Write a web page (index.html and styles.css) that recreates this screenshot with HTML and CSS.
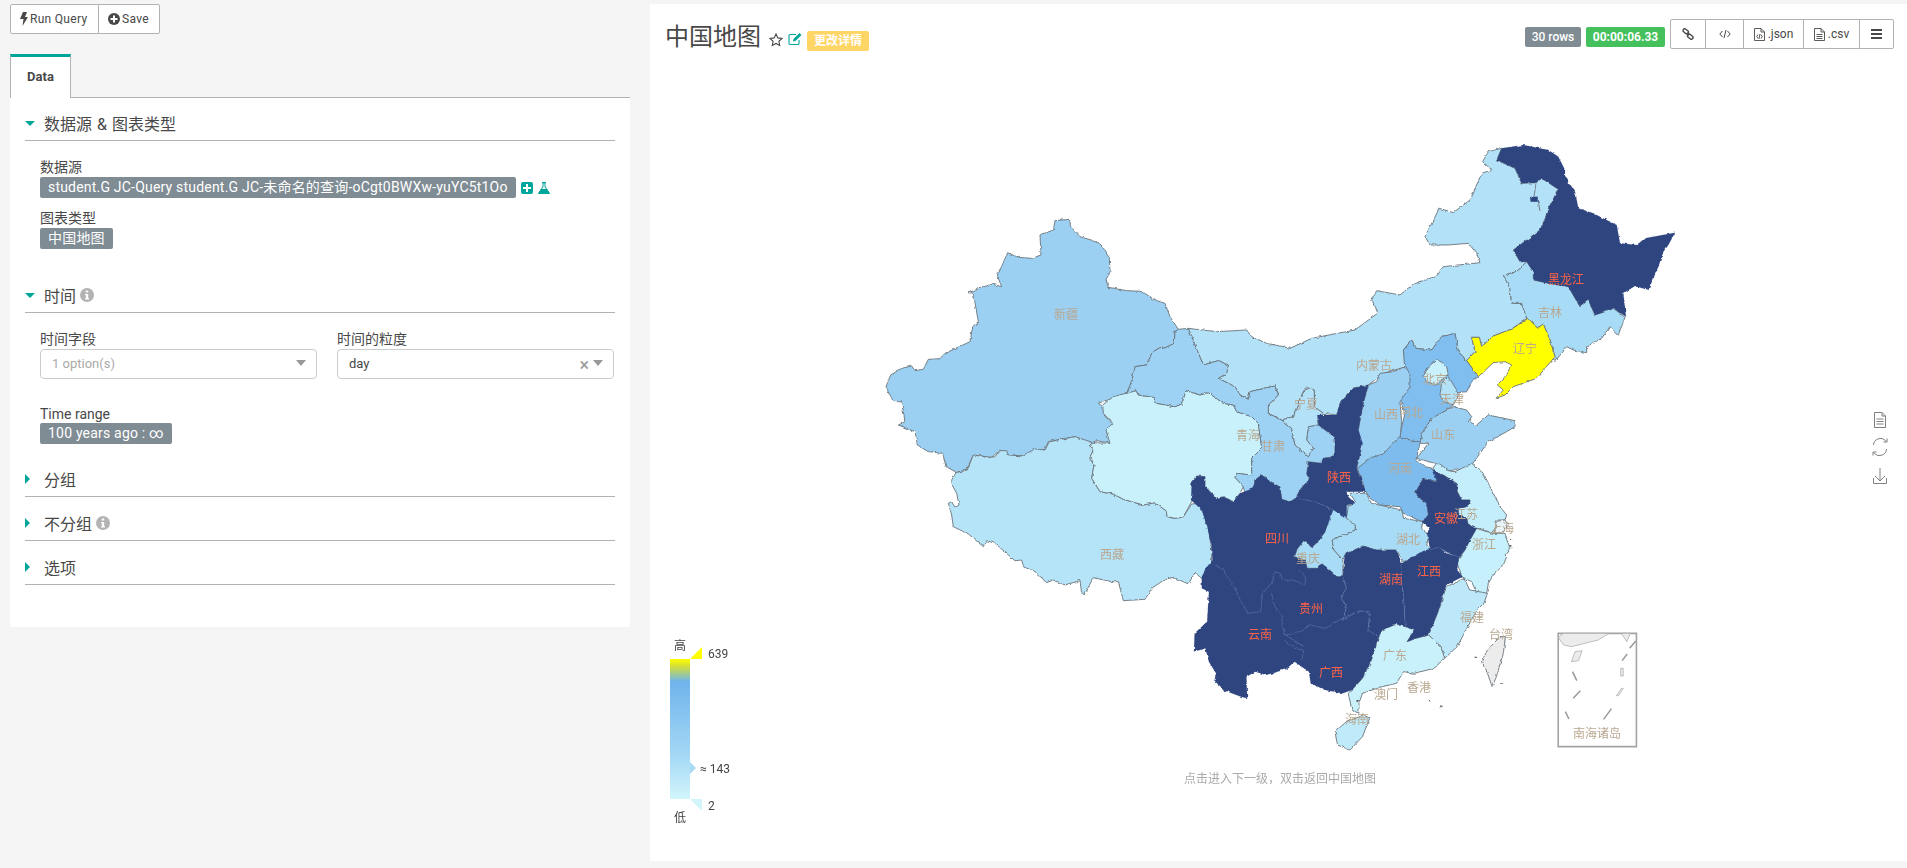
FILE: index.html
```html
<!DOCTYPE html>
<html lang="zh">
<head>
<meta charset="utf-8">
<title>中国地图</title>
<link rel="stylesheet" href="styles.css">
</head>
<body>
<div class="page">
  <aside class="side">
    <div class="btn-group">
      <button class="btn"><svg class="ico-bolt" viewBox="0 0 8 14"><path d="M3 0h4L5 5h3L2.500 14 3.500 7H0z"/></svg>Run Query</button>
      <button class="btn"><svg class="ico-plus" viewBox="0 0 12 12"><circle cx="6" cy="6" r="6"/><path class="white" d="M5 2.500h2V5h2.500v2H7v2.500H5V7H2.500V5H5z"/></svg>Save</button>
    </div>
    <div class="tabs"><div class="tab">Data</div></div>
    <div class="panel">
      <section class="section s-source">
        <div class="head"><span class="tri-down"></span>数据源 &amp; 图表类型</div>
        <div class="body">
          <div class="label">数据源</div>
          <div class="badge-row">
            <span class="badge">student.G JC-Query student.G JC-未命名的查询-oCgt0BWXw-yuYC5t1Oo</span>
            <svg class="ico-add" viewBox="0 0 12 12"><rect width="12" height="12" rx="2"/><path class="white" d="M5 2h2v3h3v2H7v3H5V7H2V5h3z"/></svg>
            <svg class="ico-flask" viewBox="0 0 12 12"><path d="M4 0h4v1H7.500v3.500L11.800 11a.7.7 0 0 1-.6 1H.8a.7.7 0 0 1-.6-1L4.500 4.500V1H4z"/><path class="white" d="M5.500 1.500h1v3.300L8 7H4l1.500-2.200z"/></svg>
          </div>
          <div class="label label-next">图表类型</div>
          <div class="badge-row"><span class="badge">中国地图</span></div>
        </div>
      </section>
      <section class="section s-time">
        <div class="head"><span class="tri-down"></span>时间<svg class="ico-info" viewBox="0 0 14 14"><circle cx="7" cy="7" r="7"/><path class="white" d="M5.800 2.500h2.400v2H5.800zM5 6h3.200v4.200H9v1.300H5v-1.300h.9V7.300H5z"/></svg></div>
        <div class="body">
          <div class="select-grid">
            <div>
              <div class="label">时间字段</div>
              <div class="select"><span class="placeholder">1 option(s)</span><span class="caret"></span></div>
            </div>
            <div>
              <div class="label">时间的粒度</div>
              <div class="select"><span class="value">day</span><span class="clear">×</span><span class="caret"></span></div>
            </div>
          </div>
          <div class="label label-range">Time range</div>
          <div class="badge-row"><span class="badge">100 years ago : ∞</span></div>
        </div>
      </section>
      <section class="section s-closed"><div class="head"><span class="tri-right"></span>分组</div></section>
      <section class="section s-closed"><div class="head"><span class="tri-right"></span>不分组<svg class="ico-info" viewBox="0 0 14 14"><circle cx="7" cy="7" r="7"/><path class="white" d="M5.800 2.500h2.400v2H5.800zM5 6h3.200v4.200H9v1.300H5v-1.300h.9V7.300H5z"/></svg></div></section>
      <section class="section s-closed"><div class="head"><span class="tri-right"></span>选项</div></section>
    </div>
  </aside>

  <main class="chart">
    <header class="chart-head">
      <div class="title-wrap">
        <h1 class="title">中国地图</h1>
        <svg class="ico-star" viewBox="0 0 14 14"><path d="M7 1l1.800 3.900 4.200.5-3.100 2.900.8 4.200L7 10.400l-3.700 2.100.8-4.200L1 5.400l4.200-.5z"/></svg>
        <svg class="ico-edit" viewBox="0 0 14 14"><path class="e1" d="M11 8v3.500a1 1 0 0 1-1 1H2a1 1 0 0 1-1-1v-8a1 1 0 0 1 1-1h6"/><path class="e2" d="M5 9.500l.5-2.500L11.500 1 13.500 3 7.500 9z"/></svg>
        <span class="tag-warn">更改详情</span>
      </div>
      <div class="tools">
        <span class="tag tag-rows">30 rows</span>
        <span class="tag tag-time">00:00:06.33</span>
        <div class="tool-group">
          <button class="tool t-link"><svg class="ico-link" viewBox="0 0 12 12"><rect x="0.700" y="1.600" width="6" height="3.400" rx="1.700" transform="rotate(40 3.700 3.300)"/><rect x="5.300" y="7" width="6" height="3.400" rx="1.700" transform="rotate(40 8.300 8.700)"/><path d="M4.800 4.700l2.400 2.600"/></svg></button>
          <button class="tool t-code"><svg class="ico-tool" viewBox="0 0 12 12"><path d="M3.500 3L.8 6l2.700 3M8.500 3l2.700 3-2.700 3M7 2L5 10"/></svg></button>
          <button class="tool t-json"><svg class="ico-file" viewBox="0 0 11 13"><path d="M.5.500h6.500L10.500 4v8.500H.5zM7 .5V4h3.500M4 6.500L2.800 8.500 4 10.500M7 6.500l1.200 2L7 10.500M6 6l-1 5"/></svg>.json</button>
          <button class="tool t-csv"><svg class="ico-file" viewBox="0 0 11 13"><path d="M.5.500h6.500L10.500 4v8.500H.5zM7 .5V4h3.500M2.500 6.500h6M2.500 8.500h6M2.500 10.500h6"/></svg>.csv</button>
          <button class="tool t-menu"><span class="bars"></span></button>
        </div>
      </div>
    </header>

    <svg class="map" viewBox="650 64 1257 797" width="1257" height="797">
      <defs>
        <linearGradient id="legendGrad" x1="0" y1="0" x2="0" y2="1">
          <stop offset="0" stop-color="#ffff00"/>
          <stop offset=".05" stop-color="#d6df33"/>
          <stop offset=".16" stop-color="#6fb4ec"/>
          <stop offset=".7" stop-color="#a5d9f5"/>
          <stop offset="1" stop-color="#d2f5fc"/>
        </linearGradient>
        <filter id="rough" filterUnits="userSpaceOnUse" x="650" y="64" width="1257" height="797">
          <feTurbulence type="fractalNoise" baseFrequency=".22" numOctaves="2" seed="4" result="n"/>
          <feDisplacementMap in="SourceGraphic" in2="n" scale="3" xChannelSelector="R" yChannelSelector="G"/>
        </filter>
      </defs>

      <g class="rough">
      <!-- frame: west -->
      <g transform="translate(860 130) scale(.33333)">
        <polygon class="p c-xj" points="585,272 628,268 632,290 660,320 700,332 725,345 748,385 750,425 738,450 745,472 800,482 845,484 885,510 915,520 930,560 955,598 945,605 943,640 912,655 905,650 880,665 858,705 825,710 815,755 800,790 715,820 730,830 732,855 760,885 740,905 752,940 710,932 690,940 645,920 565,935 555,958 530,962 490,978 440,975 420,960 395,982 340,975 318,1022 288,1026 258,1010 248,970 205,965 172,945 165,905 115,885 135,875 125,815 100,815 78,770 92,735 125,715 155,708 165,722 190,718 205,688 240,686 255,670 330,635 338,590 355,575 340,490 325,488 395,462 425,470 412,438 443,368 475,382 515,385 543,375 540,315 580,300"/>
      </g>
      <g transform="translate(880 380) scale(.33333)">
        <polygon class="p c-xz" points="228,278 262,270 280,225 325,233 345,230 358,212 380,212 385,225 425,228 465,207 495,210 508,185 585,170 640,188 628,197 640,205 630,235 642,255 635,295 660,335 700,342 730,358 790,375 825,368 858,392 862,410 885,415 910,410 935,372 960,370 985,440 995,510 995,550 985,590 965,595 945,578 925,612 880,592 855,598 815,625 795,658 730,662 715,605 695,605 640,593 615,640 605,640 600,602 555,615 520,600 500,608 465,575 430,560 425,540 405,542 345,490 320,482 310,500 265,462 240,450 220,440 215,405 205,370 215,365 225,382 237,375 230,340 218,318 215,300"/>
      </g>

      <!-- frame: north -->
      <g transform="translate(1240 130) scale(.33333)">
        <polygon class="p c-nm" points="-155,595 -70,605 20,600 35,620 80,640 130,650 150,655 215,625 345,600 415,548 395,510 410,482 480,495 520,462 585,440 610,410 720,398 710,370 685,340 625,345 570,345 555,320 598,235 640,248 690,210 725,130 755,120 728,95 745,65 785,55 770,90 825,115 845,160 888,158 905,145 955,178 925,235 925,245 900,300 820,360 840,395 860,395 830,425 790,435 810,475 815,520 845,520 860,565 815,597 760,618 725,650 718,622 695,622 705,665 680,692 655,665 645,610 605,620 575,660 525,655 515,630 490,660 498,710 430,730 385,765 340,775 300,820 290,855 250,850 223,830 223,785 215,772 195,775 180,805 160,860 125,870 85,850 85,825 115,795 105,768 30,785 25,808 0,795 -15,770 -65,745 -40,730 -35,705 -65,692 -110,705 -130,658"/>
        <polygon class="p c-jl" points="860,395 880,425 880,450 925,460 985,470 1020,530 1045,510 1065,555 1110,540 1120,535 1155,562 1135,615 1110,590 1085,625 1040,650 1040,668 1000,660 980,650 945,695 945,680 930,630 910,582 893,595 865,565 860,565 845,520 815,520 810,475 790,435 830,425"/>
        <polygon class="d" points="785,55 850,45 925,60 955,80 975,120 975,140 1005,185 1015,235 1060,250 1130,285 1140,340 1190,345 1215,325 1305,308 1285,345 1270,365 1255,410 1225,480 1185,468 1150,490 1158,560 1120,535 1110,540 1065,555 1045,510 1020,530 985,470 925,460 880,450 880,425 860,395 840,395 820,360 900,300 925,245 925,235 955,178 905,145 888,158 845,160 825,115 770,90"/>
        <polygon class="d" points="870,200 893,200 893,215 872,215"/>
        <polyline class="line" points="888,160 882,200"/>
        <polyline class="line" points="895,215 900,243"/>
        <polygon class="p c-ln" points="865,565 893,595 910,582 930,630 945,680 890,745 820,770 795,795 768,805 790,780 772,765 795,740 815,705 795,695 760,698 715,740 680,692 705,665 695,622 718,622 725,650 760,618 815,597"/>
        <polygon class="p c-he" points="490,660 515,630 525,655 575,660 605,620 645,610 655,665 680,692 715,740 695,755 680,785 640,790 640,825 605,850 575,865 545,910 540,940 478,920 495,850 478,800 505,745 495,725"/>
        <polygon class="p c-bj" points="592,688 620,710 625,735 605,750 590,765 560,755 550,740 565,710"/>
        <polygon class="p c-tj" points="605,760 625,740 650,780 655,795 640,825 610,815 600,795"/>
        <polygon class="p c-sd" points="545,915 575,865 640,830 680,840 695,860 685,875 710,885 745,855 825,872 825,890 800,905 745,935 695,1005 665,1025 650,1015 640,1022 610,1020 585,1000 530,985 565,940 540,940"/>
      </g>

      <!-- frame: centre -->
      <g transform="translate(1180 360) scale(.33333)">
        <polygon class="p c-qh" points="-232,135 -200,110 -132,92 -125,105 -80,112 -70,130 -15,140 5,132 18,92 60,105 85,98 130,130 160,135 170,155 215,170 235,190 245,265 215,295 215,345 170,340 165,352 190,380 180,400 160,425 130,410 110,415 75,380 75,350 50,348 35,365 40,395 35,425 10,470 -15,475 -38,470 -42,452 -75,428 -110,435 -170,418 -200,402 -240,395 -265,355 -258,315 -270,295 -260,265 -272,257 -260,248 -210,250 -222,210 -202,190 -230,160"/>
        <polygon class="p c-gs" points="-160,100 -145,65 -135,20 -102,15 -80,-25 -55,-40 -48,-35 -17,-50 -15,-85 -5,-92 25,-95 50,-32 70,15 115,2 145,15 140,40 115,55 165,80 180,105 205,118 210,95 285,78 295,105 265,135 265,160 305,180 335,205 345,255 385,290 400,265 380,240 385,200 415,195 465,232 465,290 430,295 425,310 385,305 380,345 390,355 355,395 355,410 330,425 305,418 300,380 280,370 245,345 225,360 220,385 195,400 190,380 165,352 170,340 215,345 215,295 245,265 235,190 215,170 170,155 160,135 130,130 85,98 60,105 18,92 5,132 -15,140 -70,130 -80,112 -125,105 -132,92"/>
        <polygon class="p c-nx" points="395,82 403,95 403,140 430,160 412,180 415,195 385,200 380,240 400,265 385,290 345,255 335,205 305,180 340,170 360,115 375,90"/>
        <polygon class="p c-sx" points="565,75 590,65 600,40 640,35 678,20 690,45 690,80 660,125 665,185 660,235 655,280 610,290 575,315 530,325 545,260 535,210 550,130"/>
      </g>

      <!-- frame: east -->
      <g transform="translate(1340 450) scale(.33333)">
        <polygon class="p c-hn" points="52,55 95,22 130,12 178,-40 240,-20 228,30 255,50 278,55 295,95 250,85 225,130 240,145 260,160 265,195 245,215 190,190 180,170 120,165 90,145 78,125"/>
        <polygon class="p c-js" points="290,40 300,42 325,62 345,65 395,40 430,70 445,100 480,170 500,195 495,210 465,210 470,225 455,250 420,235 405,235 385,225 380,205 355,190 355,175 385,165 392,150 365,150 352,125 350,100 310,75 295,70 278,55"/>
        <polygon class="p c-sh" points="465,215 495,210 505,225 490,245 460,250 470,230"/>
        <polygon class="p c-zj" points="410,235 455,250 495,250 510,295 495,315 500,320 490,345 460,375 445,400 440,430 410,430 395,395 365,380 350,335 375,300 390,270"/>
      </g>

      <!-- frame: south (x and y scales of this crop differ) -->
      <g transform="translate(1100 470) scale(.35714 .33333)">
        <polygon class="p c-cq" points="650,105 705,105 715,165 715,180 650,210 655,240 680,270 680,320 665,320 620,280 610,295 580,295 575,272 545,260 550,240 570,212 595,230 610,215 630,185"/>
        <polygon class="p c-hb" points="700,70 745,70 760,100 845,120 850,145 905,155 900,175 920,195 915,225 925,240 850,275 830,240 775,240 735,228 685,255 680,270 655,240 650,210 715,180 715,165 690,145 695,110 715,95"/>
        <polygon class="p c-fj" points="1020,325 1035,360 1085,370 1075,400 1055,420 1010,510 1000,530 965,565 955,530 920,495 945,430 970,350"/>
        <polygon class="p c-gd" points="780,500 790,480 830,462 855,470 880,480 860,515 885,505 920,495 955,530 965,565 935,595 880,610 850,605 830,640 790,650 735,670 725,700 725,730 705,720 695,670 705,660 735,625 760,570"/>
        <polygon class="p c-hi" points="690,755 740,735 755,745 735,800 700,840 665,825 658,785"/>
        <polygon class="p c-tw" points="1120,500 1135,500 1130,545 1110,620 1098,650 1085,610 1068,575 1085,540"/>
        <polygon class="d" points="257,35 271,18 294,20 294,50 327,85 345,80 373,95 392,70 429,55 434,30 453,15 485,40 504,50 509,88 532,95 555,80 583,90 625,105 653,120 630,185 610,215 595,230 570,212 550,240 545,260 575,272 580,295 610,295 620,280 665,320 680,320 690,355 675,380 690,410 680,450 730,420 755,425 750,480 780,500 760,570 735,625 705,660 680,670 630,660 590,640 585,605 545,575 520,598 465,615 435,605 410,620 412,685 395,680 345,660 320,635 325,610 305,575 295,535 263,545 265,490 300,455 305,365 285,355 285,320 300,290 315,270 312,225 300,170 285,120 255,90"/>
        <polygon class="d" points="685,255 735,228 775,240 830,240 845,280 845,340 850,380 855,470 830,462 790,480 780,500 750,480 755,425 730,420 680,450 690,410 675,380 690,355 680,320"/>
        <polygon class="d" points="845,280 900,245 945,228 970,250 1005,262 1000,300 1015,320 970,345 945,430 920,495 885,505 860,515 880,480 855,470 850,380 845,340"/>
        <polyline class="inner" points="315,285 340,295 370,340 395,395 415,430 450,425 455,370 480,340 490,305 505,310 510,330 540,330 575,345 575,320 555,300"/>
        <polyline class="inner" points="480,370 490,410 510,440 510,470 520,495 570,530"/>
        <polyline class="inner" points="515,510 545,535 570,540 565,570"/>
        <polyline class="inner" points="520,495 550,490 590,465 630,475 670,450 710,430 745,420 755,440 750,485"/>
        <polyline class="inner" points="680,320 690,355 675,380 690,410 680,450"/>
        <polyline class="inner" points="845,340 850,380 855,470"/>
        <polyline class="inner" points="555,85 625,100 650,125"/>
        <rect class="dot" x="1049" y="560" width="6" height="4"/>
        <rect class="dot" x="921" y="689" width="3" height="5"/>
        <rect class="dot" x="950" y="706" width="6" height="6"/>
        <rect class="dot" x="1121" y="639" width="4" height="3"/>
        <rect class="dot" x="1150" y="207" width="4" height="3"/>
        <rect class="dot" x="1146" y="225" width="6" height="5"/>
        <rect class="dot" x="718" y="690" width="8" height="6"/>
      </g>

      <!-- Shaanxi and Anhui sit over their neighbours -->
      <g transform="translate(1180 360) scale(.33333)">
        <polygon class="d" points="565,75 550,130 535,210 548,250 530,325 558,395 500,395 505,410 525,430 500,435 500,475 460,450 430,435 385,420 355,415 355,395 390,355 380,345 385,305 425,310 430,295 465,290 465,232 415,195 412,165 470,165 480,130 520,85"/>
      </g>
      <g transform="translate(1340 450) scale(.33333)">
        <polygon class="d" points="278,55 295,70 310,75 350,100 352,125 365,150 392,150 385,165 355,175 355,190 380,205 385,225 410,235 390,270 375,300 355,325 330,312 300,295 280,300 270,300 262,250 268,235 245,215 265,195 260,160 240,145 225,130 250,85 290,95"/>
        <polyline class="inner" points="270,300 295,292 310,300 330,312 355,320"/>
      </g>
      </g>

      <!-- South China Sea inset -->
      <g transform="translate(1100 470) scale(.35714 .33333)">
        <rect class="box" x="1283" y="490" width="219" height="340"/>
        <polygon class="isle" points="1283,502 1298,490 1425,490 1395,510 1320,530 1298,525"/>
        <polygon class="isle" points="1460,490 1485,490 1475,515"/>
        <polygon class="isle" points="1330,545 1350,542 1340,572 1320,575"/>
        <polygon class="isle" points="1458,595 1465,595 1465,618 1458,618"/>
        <polygon class="isle" points="1460,655 1465,655 1452,677 1446,677"/>
        <polyline class="dash" points="1323,605 1335,632"/>
        <polyline class="dash" points="1345,662 1325,685"/>
        <polyline class="dash" points="1303,725 1313,747"/>
        <polyline class="dash" points="1432,716 1410,748"/>
        <polyline class="dash" points="1476,552 1462,572"/>
        <polyline class="dash" points="1500,513 1483,535"/>
      </g>

      <g class="names">
        <text x="1066" y="313">新疆</text>
        <text x="1112" y="553">西藏</text>
        <text x="1248" y="434">青海</text>
        <text x="1273" y="445">甘肃</text>
        <text x="1306" y="403">宁夏</text>
        <text x="1374" y="364">内蒙古</text>
        <text x="1550" y="311">吉林</text>
        <text x="1525" y="347">辽宁</text>
        <text x="1435" y="378">北京</text>
        <text x="1452" y="398">天津</text>
        <text x="1386" y="413">山西</text>
        <text x="1411" y="411">河北</text>
        <text x="1443" y="433">山东</text>
        <text x="1400" y="467">河南</text>
        <text x="1408" y="538">湖北</text>
        <text x="1308" y="557">重庆</text>
        <text x="1466" y="513">江苏</text>
        <text x="1502" y="527">上海</text>
        <text x="1484" y="543">浙江</text>
        <text x="1472" y="616">福建</text>
        <text x="1501" y="633">台湾</text>
        <text x="1395" y="654">广东</text>
        <text x="1419" y="686">香港</text>
        <text x="1386" y="693">澳门</text>
        <text x="1357" y="718">海南</text>
        <text x="1597" y="732">南海诸岛</text>
      </g>
      <g class="names hot">
        <text x="1566" y="278">黑龙江</text>
        <text x="1339" y="476">陕西</text>
        <text x="1277" y="537">四川</text>
        <text x="1446" y="517">安徽</text>
        <text x="1429" y="570">江西</text>
        <text x="1391" y="578">湖南</text>
        <text x="1311" y="607">贵州</text>
        <text x="1260" y="633">云南</text>
        <text x="1331" y="671">广西</text>
      </g>
      <text class="hint" x="1280" y="777">点击进入下一级，双击返回中国地图</text>

      <!-- legend -->
      <rect x="670" y="659" width="20" height="140" fill="url(#legendGrad)"/>
      <polygon class="lg-top" points="690,659 702,659 702,647"/>
      <polygon class="lg-bot" points="690,799 702,799 702,811"/>
      <polygon class="lg-mid" points="690,762 696,768 690,774"/>
      <text class="lg-t" x="680" y="644">高</text>
      <text class="lg-t" x="680" y="816">低</text>
      <text class="lg-v" x="708" y="654">639</text>
      <text class="lg-v" x="700" y="769">≈ 143</text>
      <text class="lg-v" x="708" y="806">2</text>

      <!-- toolbox -->
      <g class="toolbox">
        <path d="M1874.500 412.500h7.500l3.500 3.500v11.500h-11zM1882 412.500v3.500h3.500M1876.500 419h7M1876.500 421.500h7M1876.500 424h7"/>
        <path d="M1873.500 445a7 7 0 0 1 12-4.500l1.500 1.500M1887 442v-3.500M1887 442h-3.500M1886.500 449a7 7 0 0 1-12 4.500l-1.500-1.500M1873 452v3.500M1873 452h3.500"/>
        <path d="M1880 468v13M1875 476l5 5 5-5M1873.500 478v5.500h13V478"/>
      </g>
    </svg>
  </main>
</div>
</body>
</html>
```

FILE: styles.css
```css
* { box-sizing: border-box; }
html, body { margin: 0; padding: 0; }
body {
  width: 1907px;
  height: 868px;
  overflow: hidden;
  background: #f5f5f5;
  color: #484848;
  font-family: Roboto, "Noto Sans CJK SC", sans-serif;
  font-size: 14px;
}
.page { display: flex; align-items: flex-start; }
.white { fill: #fff; }

/* left column */
.side { width: 620px; margin-left: 10px; padding-top: 4px; }
.btn-group { display: flex; height: 30px; }
.btn {
  display: flex; align-items: center; gap: 2px;
  height: 30px; padding: 0 9px;
  background: #fff; color: #484848;
  border: 1px solid #b3b3b3;
  font: 12px Roboto, sans-serif;
  letter-spacing: .3px;
  white-space: nowrap;
}
.btn:first-child { width: 89px; border-radius: 2px 0 0 2px; }
.btn:last-child { width: 62px; margin-left: -1px; border-radius: 0 2px 2px 0; }
.ico-bolt { width: 8px; height: 14px; fill: #484848; flex: none; }
.ico-plus { width: 12px; height: 12px; fill: #484848; flex: none; }

.tabs { height: 44px; margin-top: 20px; display: flex; border-bottom: 1px solid #b3b3b3; }
.tab {
  width: 61px; height: 44px;
  background: #fff;
  border: 1px solid #b3b3b3; border-top: 3px solid #00a699; border-bottom: 0;
  font-weight: 700; font-size: 13px; text-align: center; line-height: 39px;
  letter-spacing: .1px;
}
.panel { background: #fff; padding: 8px 15px 33px; }
.head {
  display: flex; align-items: center;
  height: 35px;
  border-bottom: 1px solid #b3b3b3;
  font-size: 16px; color: #484848;
  word-spacing: 1px;
}
.tri-down {
  width: 0; height: 0; margin-right: 9px;
  border-left: 5px solid transparent; border-right: 5px solid transparent;
  border-top: 5px solid #00a699;
}
.tri-right {
  width: 0; height: 0; margin-right: 14px;
  border-top: 5px solid transparent; border-bottom: 5px solid transparent;
  border-left: 5px solid #00a699;
}
.ico-info { width: 14px; height: 14px; fill: #b3b3b3; margin-left: 4px; }
.body { padding: 17px 0 0 15px; }
.s-source { margin-bottom: 29px; }
.s-time { margin-bottom: 18px; }
.s-closed { margin-bottom: 9px; }
.label { height: 18px; line-height: 18px; margin-bottom: 1px; font-size: 14px; color: #484848; }
.label-next { margin-top: 11px; }
.label-range { margin-top: 26px; margin-bottom: 0; }
.badge-row { display: flex; align-items: center; height: 21px; }
.badge {
  display: inline-block; height: 21px; line-height: 21px;
  padding: 0 8px;
  background: #7f8c94; color: #fff;
  border-radius: 2px;
  font-size: 14px; white-space: nowrap;
  letter-spacing: .2px;
}
.ico-add { width: 12px; height: 12px; fill: #00a699; margin-left: 5px; }
.ico-flask { width: 12px; height: 12px; fill: #00a699; margin-left: 5px; }
.select-grid { display: grid; grid-template-columns: 277px 277px; column-gap: 20px; }
.select {
  position: relative;
  height: 30px; padding-left: 11px; line-height: 28px;
  border: 1px solid #ccc; border-radius: 4px;
  font-size: 13px; background: #fff;
}
.placeholder { color: #aaa; }
.value { color: #484848; }
.caret {
  position: absolute; right: 10px; top: 10px;
  width: 0; height: 0;
  border-left: 5px solid transparent; border-right: 5px solid transparent;
  border-top: 6px solid #999;
}
.clear { position: absolute; right: 24px; top: 1px; color: #999; font-size: 18px; }

/* right chart panel */
.chart { width: 1257px; height: 857px; margin: 4px 0 0 20px; background: #fff; }
.chart-head {
  display: flex; justify-content: space-between; align-items: flex-start;
  height: 60px; padding: 15px 13px 0 15px;
}
.title-wrap { display: flex; align-items: flex-start; height: 32px; margin-top: 2px; }
.title { margin: 0; font-size: 24px; font-weight: 400; color: #484848; line-height: 32px; }
.ico-star { width: 14px; height: 14px; margin: 12px 0 0 8px; fill: #fff; stroke: #484848; stroke-width: 1.100; }
.ico-edit { width: 14px; height: 14px; margin: 11px 0 0 5px; }
.e1 { fill: none; stroke: #00a699; stroke-width: 1.100; }
.e2 { fill: #00a699; }
.tag-warn {
  margin: 10px 0 0 5px; padding: 0 7px;
  height: 20px; line-height: 20px;
  background: #ffd566; color: #fff; border-radius: 2px;
  font-size: 12px; font-weight: 700;
}
.tools { display: flex; align-items: flex-start; }
.tag {
  height: 20px; line-height: 20px; margin-top: 8px;
  text-align: center; color: #fff; border-radius: 2px;
  font-size: 12px;
}
.tag-rows { width: 56px; background: #7f8c94; font-weight: 500; }
.tag-time { width: 79px; margin-left: 5px; background: #44c05d; font-weight: 700; }
.tool-group { display: flex; height: 30px; margin-left: 5px; }
.tool {
  display: flex; align-items: center; justify-content: center; gap: 3px;
  height: 30px; padding: 0;
  margin-left: -1px;
  background: #fff; color: #484848;
  border: 1px solid #b3b3b3;
  font: 12px Roboto, sans-serif;
}
.t-link { width: 36px; margin-left: 0; border-radius: 2px 0 0 2px; }
.t-code { width: 39px; }
.t-json { width: 61px; }
.t-csv { width: 57px; }
.t-menu { width: 35px; border-radius: 0 2px 2px 0; }
.ico-tool { width: 12px; height: 12px; fill: none; stroke: #484848; stroke-width: 1; }
.ico-link { width: 12px; height: 12px; fill: none; stroke: #484848; stroke-width: 1.400; }
.ico-file { width: 11px; height: 13px; fill: none; stroke: #484848; stroke-width: .9; }
.bars {
  display: block; width: 11px; height: 10px;
  border-top: 2px solid #484848; border-bottom: 2px solid #484848;
  position: relative;
}
.bars::after {
  content: ""; position: absolute; left: 0; right: 0; top: 2px; height: 2px; background: #484848;
}

/* map */
.map { display: block; }
.rough { filter: url(#rough); }
.p, .line, .inner, .box, .isle, .dash, .dot { vector-effect: non-scaling-stroke; }
.p { stroke: #6b747a; stroke-width: .9; stroke-linejoin: round; }
.d { fill: #2d4480; stroke: #2d4480; stroke-width: .4; }
.line { fill: none; stroke: #6b747a; stroke-width: .9; }
.inner { fill: none; stroke: #6f82ad; stroke-width: .5; }
.dot { fill: #666; }
.box { fill: #fff; stroke: #a3a3a3; stroke-width: 1.600; }
.isle { fill: #ececec; stroke: #a6a6a6; stroke-width: .7; }
.dash { fill: none; stroke: #999; stroke-width: 1.500; }
.c-xj { fill: #9bd0f3; }
.c-xz { fill: #b5e3f8; }
.c-qh { fill: #c9f1fb; }
.c-nm { fill: #b3e1f8; }
.c-jl { fill: #a8dcf6; }
.c-ln { fill: #ffff00; }
.c-he { fill: #80bef0; }
.c-bj { fill: #c9f1fb; }
.c-tj { fill: #b3e1f8; }
.c-sd { fill: #9bd0f3; }
.c-gs { fill: #9dd2f4; }
.c-nx { fill: #b3e1f8; }
.c-sx { fill: #9bd0f3; }
.c-hn { fill: #7fbcee; }
.c-js { fill: #c4eefb; }
.c-sh { fill: #e8f4f8; }
.c-zj { fill: #c6f0fb; }
.c-hb { fill: #a8dcf6; }
.c-cq { fill: #a8dcf6; }
.c-fj { fill: #bce8fa; }
.c-gd { fill: #c9f1fb; }
.c-hi { fill: #bfeafa; }
.c-tw { fill: #ececec; }
.names text {
  font-size: 12px; fill: #b9a78f; text-anchor: middle; dominant-baseline: central;
  font-family: "Noto Sans CJK SC", sans-serif;
}
.names.hot text { fill: #ff6347; }
.hint {
  font-size: 12px; fill: #aaa; text-anchor: middle; dominant-baseline: central;
  font-family: "Noto Sans CJK SC", sans-serif;
}
.lg-top { fill: #ffff00; }
.lg-bot { fill: #d2f5fc; }
.lg-mid { fill: #a9daf5; }
.lg-t { font-size: 12px; fill: #444; text-anchor: middle; dominant-baseline: central; font-family: "Noto Sans CJK SC", sans-serif; }
.lg-v { font-size: 12px; fill: #444; dominant-baseline: central; font-family: Roboto, sans-serif; }
.toolbox path { fill: none; stroke: #808080; stroke-width: 1; }
```
